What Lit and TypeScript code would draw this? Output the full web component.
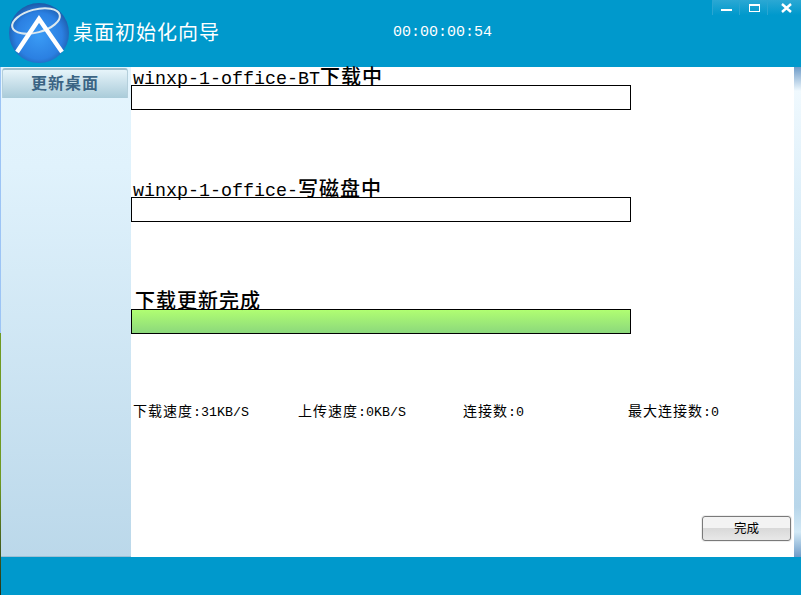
import { LitElement, html, css } from "lit";
import { customElement } from "lit/decorators.js";

@customElement("app-root")
export class AppRoot extends LitElement {
  static styles = css`
    :host { display: block; width: 801px; height: 595px; overflow: hidden; font-family: "Noto Sans CJK SC", "DejaVu Sans", sans-serif; }
    .win { display: flex; width: 801px; height: 595px; background: #0099cc; }
    .edge { width: 1px; background: linear-gradient(#0099cc 0 67px, #9cc4f5 67px 333px, #6f9a22 333px, #6f9a22 480px, #26331a); flex: none; }
    .main { flex: 1; display: flex; flex-direction: column; min-width: 0; }
    .top { height: 67px; flex: none; display: flex; align-items: flex-start; position: relative; }
    .logo { width: 64px; height: 66px; margin: 1px 0 0 7px; flex: none; }
    .title { color: #fff; font-size: 20px; letter-spacing: 1px; line-height: 24px; margin: 20px 0 0 1px; width: 320px; flex: none; }
    .clock { color: #fff; font: 15px/18px "Liberation Mono", monospace; margin-top: 24px; }
    .ctl { position: absolute; top: 0; left: 711px; display: flex; }
    .ctl div { height: 15px; box-sizing: border-box; border-left: 1px solid #2aa6d2; display: flex; background: linear-gradient(#2ba8d4, #0099cc); }
    .ctl .c1 { width: 27px; padding: 9px 0 0 8px; }
    .ctl .c2 { width: 28px; padding: 4px 0 0 9px; }
    .ctl .c3 { width: 34px; padding: 3px 0 0 13px; }
    .ctl svg { display: block; }
    .mid { flex: none; height: 490px; display: flex; }
    .side { width: 130px; flex: none; background: linear-gradient(#e4f5fe, #e0f2fc 100px, #bbd8ea 489px, #9cc0d4 489px); }
    .tab { height: 30px; margin: 1px 3px 0 1px; background: linear-gradient(#e6f4fa, #a9cbd9); border: 1px solid #b4cfdb; border-top: 2px solid #9dbccb; border-bottom: none; border-radius: 3px 3px 0 0; box-sizing: border-box; color: #3b6484; font-size: 16px; letter-spacing: 1px; line-height: 25px; text-align: center; font-weight: 700; }
    .content { flex: 1; background: #fff; display: flex; flex-direction: column; position: relative; min-width: 0; }
    .block { height: 112px; flex: none; }
    .lbl { color: #000; padding-left: 2px; height: 18px; line-height: 17px; white-space: nowrap; font-family: "Liberation Mono", monospace; font-size: 18.33px; }
    .lbl.zh { padding-left: 4px; }
    .lbl i { font: 500 20px/17px "Noto Sans CJK SC", sans-serif; font-style: normal; letter-spacing: 1px; }
    .bar { width: 500px; height: 25px; box-sizing: border-box; border: 1px solid #000; background: #fff; }
    .bar.done { background: linear-gradient(#b0fe72, #8cd87c); }
    .stats { display: flex; font: 13.33px/16px "Liberation Mono", monospace; color: #000; margin-top: -1px; padding-left: 2px; }
    .stats span { width: 165px; flex: none; white-space: nowrap; }
    .stats i { font: 14px/16px "Noto Sans CJK SC", sans-serif; font-style: normal; letter-spacing: 1px; }
    .btn { position: absolute; left: 571px; top: 449px; width: 89px; height: 25px; box-sizing: border-box; border: 1px solid #7a7a7a; border-radius: 3px; box-shadow: 0 0 0 1px #eee; background: linear-gradient(#f3f3f3 0 50%, #d9d9d9 50%, #e8e8e8); font-size: 12.5px; line-height: 22px; text-align: center; color: #000; }
    .rail { width: 7px; flex: none; background: linear-gradient(#6f9cc8, #f0f9fe 24px, #dff0fa 120px, #b8d6ea 440px, #d2e9f6 465px, #6f9cc8); }
    .foot { flex: 1; }
  `;

  render() {
    return html`<div class="win">
      <div class="edge"></div>
      <div class="main">
        <div class="top">
          <svg class="logo" viewBox="8 1 64 66">
            <defs>
              <radialGradient id="g" cx="50%" cy="55%" r="55%">
                <stop offset="0" stop-color="#3a9bf5" /><stop offset="0.7" stop-color="#2b80e2" /><stop offset="1" stop-color="#1c5aa8" />
              </radialGradient>
            </defs>
            <circle cx="39" cy="33" r="30" fill="url(#g)" />
            <ellipse cx="36" cy="21" rx="24.5" ry="11.5" transform="rotate(-15 36 21)" fill="none" stroke="#dbe8ee" stroke-width="2" />
            <path d="M17 52 L39 19 L62 52" fill="none" stroke="#fff" stroke-width="4.4" />
          </svg>
          <div class="title">桌面初始化向导</div>
          <div class="clock">00:00:00:54</div>
          <div class="ctl">
            <div class="c1"><svg width="11" height="2"><rect width="11" height="2" fill="#fff"/></svg></div>
            <div class="c2"><svg width="11" height="9"><rect x=".5" y=".5" width="10" height="7" fill="none" stroke="#fff"/><rect width="11" height="2" fill="#fff"/></svg></div>
            <div class="c3"><svg width="11" height="10"><path d="M1 1 L10 9 M10 1 L1 9" stroke="#fff" stroke-width="2.4" fill="none"/></svg></div>
          </div>
        </div>
        <div class="mid">
          <div class="side"><div class="tab">更新桌面</div></div>
          <div class="content">
            <div class="block"><div class="lbl">winxp-1-office-BT<i>下载中</i></div><div class="bar"></div></div>
            <div class="block"><div class="lbl">winxp-1-office-<i>写磁盘中</i></div><div class="bar"></div></div>
            <div class="block"><div class="lbl zh"><i>下载更新完成</i></div><div class="bar done"></div></div>
            <div class="stats"><span><i>下载速度</i>:31KB/S</span><span><i>上传速度</i>:0KB/S</span><span><i>连接数</i>:0</span><span><i>最大连接数</i>:0</span></div>
            <div class="btn">完成</div>
          </div>
          <div class="rail"></div>
        </div>
        <div class="foot"></div>
      </div>
    </div>`;
  }
}
